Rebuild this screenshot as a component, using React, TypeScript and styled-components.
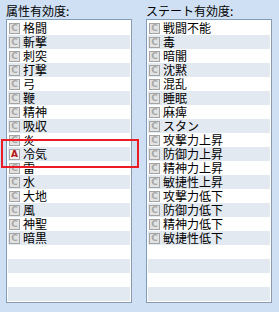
import React from 'react'
import styled, { createGlobalStyle } from 'styled-components'

const GlobalStyle = createGlobalStyle`
  html, body {
    margin: 0;
    padding: 0;
    background: #cfe0f5;
  }
  body {
    font-family: "Noto Sans CJK JP", "Noto Sans", sans-serif;
    font-size: 12px;
  }
`

const Page = styled.div`
  position: relative;
  width: 279px;
  height: 312px;
  box-sizing: border-box;
  padding: 3px 7px 0 6px;
  display: flex;
  gap: 14px;
`

const Column = styled.div`
  width: 126px;
  display: flex;
  flex-direction: column;
`

const Label = styled.div`
  height: 16px;
  line-height: 15px;
  font-size: 12px;
  color: #000;
  white-space: nowrap;
`

const ListBox = styled.div`
  box-sizing: border-box;
  height: 284px;
  border: 1px solid #7f9db9;
  border-right-color: #8a9aac;
  border-bottom-color: #8a9aac;
  background: #fff;
  padding: 1px;
  display: flex;
  flex-direction: column;
  overflow: hidden;
`

const Row = styled.div<{ $alt: boolean }>`
  height: 14px;
  flex: none;
  display: flex;
  align-items: center;
  gap: 3px;
  padding-left: 1px;
  background: ${({ $alt }) => ($alt ? '#e3e9f1' : '#ffffff')};
`

const Mark = styled.span<{ $on: boolean }>`
  box-sizing: border-box;
  width: 11px;
  height: 11px;
  flex: none;
  border: 1px solid #a4a4a4;
  background: ${({ $on }) => ($on ? '#f4eeee' : '#e2e2e2')};
  color: ${({ $on }) => ($on ? '#b01818' : '#a8a8a8')};
  font-family: "DejaVu Sans", sans-serif;
  font-weight: bold;
  font-size: 9px;
  line-height: 9px;
  text-align: center;
`

const ItemText = styled.span`
  font-size: 12px;
  line-height: 14px;
  color: #000;
  white-space: nowrap;
`

const Highlight = styled.div`
  position: absolute;
  left: 1px;
  top: 139px;
  width: 138px;
  height: 29px;
  box-sizing: border-box;
  border: 2px solid #ec1c24;
  pointer-events: none;
`

const ROWS = 20

const elements = [
  '格闘', '斬撃', '刺突', '打撃', '弓', '鞭', '精神', '吸収',
  '炎', '冷気', '雷', '水', '大地', '風', '神聖', '暗黒',
]

const states = [
  '戦闘不能', '毒', '暗闇', '沈黙', '混乱', '睡眠', '麻痺', 'スタン',
  '攻撃力上昇', '防御力上昇', '精神力上昇', '敏捷性上昇',
  '攻撃力低下', '防御力低下', '精神力低下', '敏捷性低下',
]

const RateList: React.FC<{ items: string[]; marks?: Record<number, string> }> = ({ items, marks = {} }) => (
  <ListBox>
    {Array.from({ length: ROWS }, (_, i) => {
      const name = items[i]
      const mark = marks[i] ?? 'C'
      return (
        <Row key={i} $alt={i % 2 === 1}>
          {name && (
            <>
              <Mark $on={mark !== 'C'}>{mark}</Mark>
              <ItemText>{name}</ItemText>
            </>
          )}
        </Row>
      )
    })}
  </ListBox>
)

export default function App() {
  return (
    <>
      <GlobalStyle />
      <Page>
        <Column>
          <Label>属性有効度:</Label>
          <RateList items={elements} marks={{ 9: 'A' }} />
        </Column>
        <Column>
          <Label>ステート有効度:</Label>
          <RateList items={states} />
        </Column>
        <Highlight />
      </Page>
    </>
  )
}
